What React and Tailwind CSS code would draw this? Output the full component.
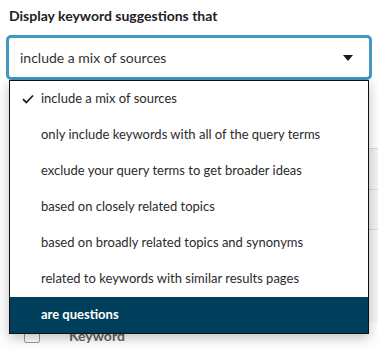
import { useState } from 'react'

const options = [
  'include a mix of sources',
  'only include keywords with all of the query terms',
  'exclude your query terms to get broader ideas',
  'based on closely related topics',
  'based on broadly related topics and synonyms',
  'related to keywords with similar results pages',
  'are questions',
]

export default function App() {
  const [selected] = useState(0)
  const [hovered, setHovered] = useState(6)

  return (
    <div className="w-[378px] h-[354px] bg-white overflow-hidden font-['Lato','Liberation_Sans',sans-serif] text-[#2b2b2b]">
      <div className="pt-[6px] pl-[9px] text-[14px] font-bold leading-[20px] text-[#1e2126]">
        Display keyword suggestions that
      </div>

      <div className="mt-[9px] mx-[6px] h-[45px] rounded-[5px] border-[3px] border-[#4198c2] flex items-center justify-between pl-[11px] pr-[16px] bg-white">
        <span className="text-[14px] leading-[20px] text-[#333]">include a mix of sources</span>
        <svg width="10" height="6" viewBox="0 0 10 6" className="fill-[#1a1a1a]">
          <path d="M0 0h10L5 6z" />
        </svg>
      </div>

      <div className="relative">
        {/* table underneath */}
        <div className="pt-[68px] pl-[9px] pr-0">
          <div className="h-[41px] border-t border-[#d9d9d9] bg-[#f4f4f4]" />
          <div className="h-[40px] border-t border-[#d9d9d9] bg-[#f4f4f4]" />
          <div className="h-[94px] border-t border-[#d9d9d9] bg-[#f7f7f7]" />
          <div className="flex items-center h-[24px] gap-[29px] pl-[15px]">
            <span className="w-[16px] h-[16px] rounded-[2px] border-[1.5px] border-[#9a9a9a] bg-white" />
            <span className="text-[14px] font-bold text-[#666]">Keyword</span>
          </div>
        </div>

        {/* dropdown menu */}
        <div className="absolute left-[9px] top-0 w-[360px] bg-white border border-[#111] shadow-[0_4px_12px_rgba(0,0,0,0.25)]">
          {options.map((opt, i) => (
            <div
              key={opt}
              onMouseEnter={() => setHovered(i)}
              className={
                'relative h-[36px] flex items-center pl-[31px] text-[13px] ' +
                (hovered === i ? 'bg-[#003f5c] text-white font-bold' : 'text-[#2b2b2b]')
              }
            >
              {selected === i && (
                <svg width="12" height="10" viewBox="0 0 12 10" className="absolute left-[12px] top-[13px]">
                  <path d="M1 5.2l3.3 3.3L11 1.5" fill="none" stroke="#1f1f1f" strokeWidth="1.8" />
                </svg>
              )}
              {opt}
            </div>
          ))}
        </div>
      </div>
    </div>
  )
}
